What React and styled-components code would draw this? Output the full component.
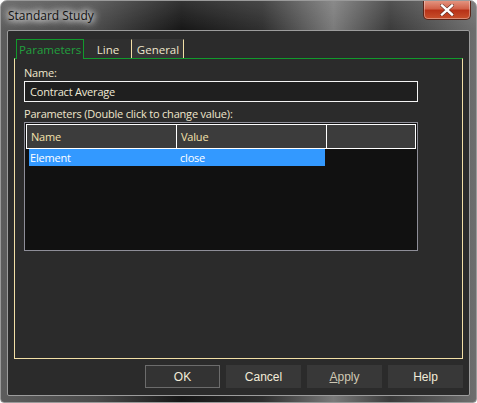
import React from 'react'
import styled, { createGlobalStyle } from 'styled-components'

const GlobalStyle = createGlobalStyle`
  * { box-sizing: border-box; }
  body {
    margin: 0;
    background: #ffffff;
    font-family: "Open Sans", "Noto Sans", sans-serif;
  }
`

const Window = styled.div`
  width: 477px;
  height: 403px;
  display: flex;
  flex-direction: column;
  border-radius: 7px 7px 4px 4px;
  border: 1px solid #9a9a9a;
  background:
    linear-gradient(180deg, rgba(255,255,255,0.12) 0%, rgba(255,255,255,0) 30px),
    linear-gradient(90deg, #5c5c5c 0%, #4a4a4a 20%, #161616 38%, #2e2e2e 55%, #7a7a7a 70%, #3a3a3a 82%, #6e6e6e 100%);
  overflow: hidden;
`

const TitleBar = styled.div`
  height: 29px;
  display: flex;
  justify-content: space-between;
  align-items: flex-start;
`

const Title = styled.div`
  padding: 6px 0 0 7px;
  font-size: 12px;
  color: #111;
  text-shadow: 0 0 6px #fff, 0 0 8px #fff, 0 0 10px rgba(255,255,255,0.8);
`

const CloseButton = styled.div`
  width: 48px;
  height: 20px;
  margin: -1px 5px 0 0;
  border: 1px solid #5a2418;
  border-top: none;
  border-radius: 0 0 5px 5px;
  background: linear-gradient(180deg, #e59a86 0%, #d2624a 45%, #b83218 55%, #c8502c 100%);
  box-shadow: inset 0 0 0 1px rgba(255,255,255,0.35);
  display: flex;
  align-items: center;
  justify-content: center;
`

const Client = styled.div`
  flex: 1;
  margin: 0 6px 6px 6px;
  border: 1px solid #9c9c9c;
  border-radius: 2px;
  background: #2b2b2b;
  padding: 8px 6px 7px 6px;
  display: flex;
  flex-direction: column;
  font-size: 11px;
  letter-spacing: -0.2px;
`

const TabStrip = styled.div`
  height: 19px;
  display: flex;
  padding-left: 2px;
`

const Tab = styled.div`
  width: ${p => p.$w}px;
  display: flex;
  align-items: center;
  justify-content: center;
  font-size: 11.5px;
  letter-spacing: 0;
  color: ${p => (p.$active ? '#22a03e' : '#efe6cc')};
  background: ${p => (p.$active ? '#2b2b2b' : p.$bg || '#2f2f2f')};
  border: 1px solid ${p => (p.$active ? '#119a2c' : 'transparent')};
  border-bottom: none;
  border-right: 1px solid ${p => (p.$active ? '#119a2c' : '#f2dfa6')};
  margin-bottom: ${p => (p.$active ? '-1px' : '0')};
  height: ${p => (p.$active ? '20px' : '19px')};
  position: relative;
  z-index: ${p => (p.$active ? 1 : 0)};
`

const Panel = styled.div`
  height: 301px;
  border: 1px solid #f2dfa6;
  border-top: 1px solid #119a2c;
  padding: 6px 9px 0 9px;
  display: flex;
  flex-direction: column;
`

const Label = styled.div`
  height: 16px;
  line-height: 16px;
  color: #efe6cc;
  margin-top: ${p => p.$mt || 0}px;
`

const Input = styled.div`
  width: 394px;
  height: 21px;
  border: 1px solid #f4f4f4;
  background: #1f1f1f;
  color: #efe9d6;
  line-height: 19px;
  padding-left: 5px;
`

const Grid = styled.div`
  width: 394px;
  height: 129px;
  border: 1px solid #8e8e98;
  background: #111111;
  padding: 1px;
`

const HeaderRow = styled.div`
  display: grid;
  grid-template-columns: 150px 150px 1fr;
  height: 25px;
  border: 1px solid #ffffff;
  background: #3c3c3c;
`

const HeaderCell = styled.div`
  color: #f4e2ac;
  padding-left: 4px;
  display: flex;
  align-items: center;
  border-right: ${p => (p.$last ? 'none' : '1px solid #ffffff')};
`

const DataRow = styled.div`
  display: grid;
  grid-template-columns: 146px 150px;
  width: 296px;
  height: 17px;
  margin-left: 3px;
  background: ${p => (p.$selected ? '#3399ff' : 'transparent')};
`

const DataCell = styled.div`
  color: #ffffff;
  padding-left: ${p => p.$pl}px;
  display: flex;
  align-items: center;
`

const ButtonRow = styled.div`
  display: flex;
  justify-content: flex-end;
  gap: 6px;
  margin-top: 6px;
`

const Button = styled.div`
  width: 75px;
  height: 23px;
  background: ${p => (p.$default ? '#333333' : '#383838')};
  border: 1px solid ${p => (p.$default ? '#6c6c6c' : '#383838')};
  font-family: "Liberation Sans", Arial, sans-serif;
  font-size: 12px;
  letter-spacing: 0;
  color: ${p => (p.$disabled ? '#cfc8b4' : '#f2ecd8')};
  display: flex;
  align-items: center;
  justify-content: center;
  u { text-decoration: underline; }
`

export default function App() {
  return (
    <>
      <GlobalStyle />
      <Window>
        <TitleBar>
          <Title>Standard Study</Title>
          <CloseButton>
            <svg width="14" height="12" viewBox="0 0 14 12">
              <path d="M2 1.5 L12 10.5 M12 1.5 L2 10.5" stroke="#5a2a20" strokeWidth="3.6" strokeLinecap="square" />
              <path d="M2 1.5 L12 10.5 M12 1.5 L2 10.5" stroke="#ffffff" strokeWidth="2.4" strokeLinecap="square" />
            </svg>
          </CloseButton>
        </TitleBar>
        <Client>
          <TabStrip>
            <Tab $active $w={68}>Parameters</Tab>
            <Tab $w={48}>Line</Tab>
            <Tab $w={52} $bg="#363636">General</Tab>
          </TabStrip>
          <Panel>
            <Label>Name:</Label>
            <Input>Contract Average</Input>
            <Label $mt={4}>Parameters (Double click to change value):</Label>
            <Grid>
              <HeaderRow>
                <HeaderCell>Name</HeaderCell>
                <HeaderCell>Value</HeaderCell>
                <HeaderCell $last />
              </HeaderRow>
              <DataRow $selected>
                <DataCell $pl={1}>Element</DataCell>
                <DataCell $pl={5}>close</DataCell>
              </DataRow>
            </Grid>
          </Panel>
          <ButtonRow>
            <Button $default>OK</Button>
            <Button>Cancel</Button>
            <Button $disabled><u>A</u>pply</Button>
            <Button>Help</Button>
          </ButtonRow>
        </Client>
      </Window>
    </>
  )
}
